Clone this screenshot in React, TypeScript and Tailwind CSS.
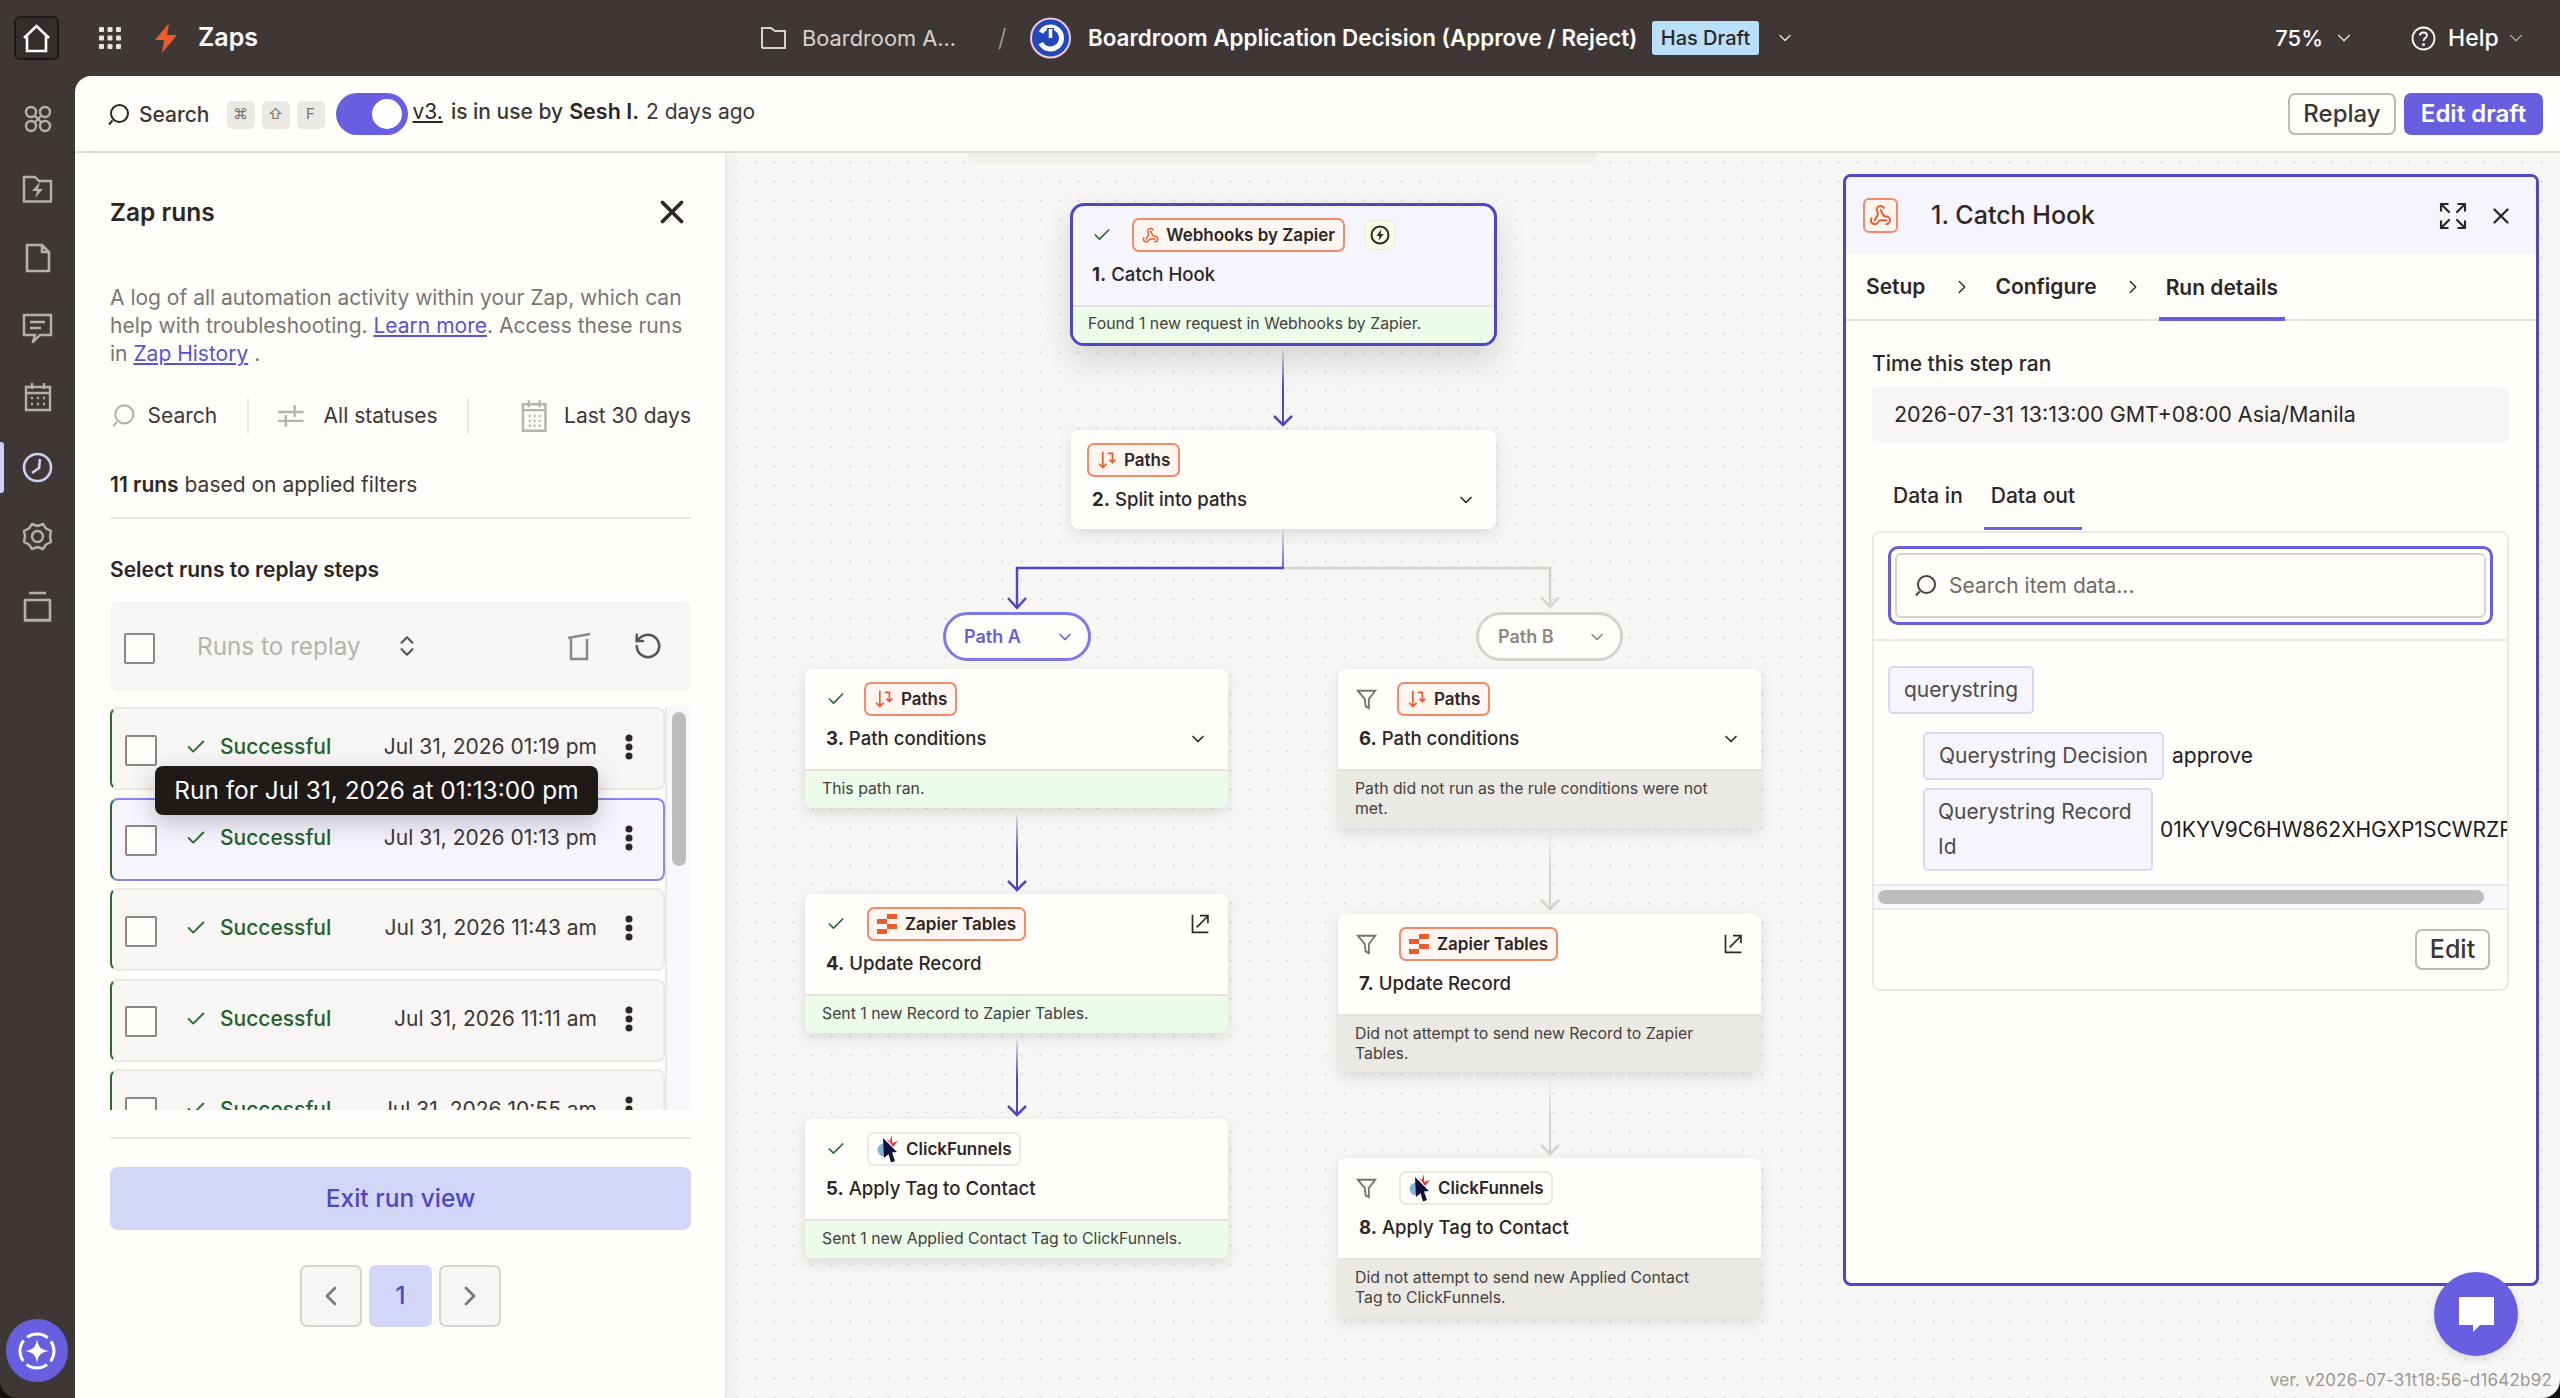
import React from "react";
import { Check, ChevronDown, ChevronLeft, ChevronRight, ChevronsUpDown, Expand, RotateCcw, Webhook, X } from "lucide-react";

const P = "#675fdf";
const D = "#4f46c2";

function S({ c = "", size = 24, vb = 24, sw = 2, color = "currentColor", children }: any) {
  return (
    <svg className={c} width={size} height={size} viewBox={`0 0 ${vb} ${vb}`} fill="none" stroke={color} strokeWidth={sw}>
      {children}
    </svg>
  );
}

const SearchIcon = ({ size = 22, color = "#4a4341", sw = 2 }: any) => (
  <S size={size} color={color} sw={sw}>
    <circle cx="13.5" cy="10.5" r="8.5" />
    <path d="M6.5 17.5 L3 21.5" />
  </S>
);

const PathsIcon = ({ size = 20 }: any) => (
  <S size={size} color="#f0592a" sw={2}>
    <path d="M7 2 V21 M2.5 16.5 L7 21 L11.5 16.5" />
    <path d="M13 4 H18.5 V15 M15 11.5 L18.5 15 L22 11.5" />
  </S>
);

const TablesIcon = () => (
  <svg width="21" height="20" viewBox="0 0 21 20" fill="#f0592a">
    <rect x="10" y="0" width="10" height="5" />
    <rect x="0" y="5" width="10" height="5" />
    <rect x="10" y="10" width="10" height="5" />
    <rect x="0" y="15" width="10" height="5" />
  </svg>
);

const CFIcon = () => (
  <svg width="22" height="28" viewBox="0 0 22 28">
    <circle cx="7" cy="15" r="6.5" fill="#7fb3dc" />
    <path d="M10 3 L12 8 L15 0 L15 8 L21 6 L16 12 Z" fill="#e8343f" />
    <path d="M6 3 L20 17 L15 17.5 L18 26 L14 27.5 L11.5 19 L7 23 Z" fill="#12113d" />
  </svg>
);

const ExtLink = () => (
  <S size={20} color="#2d2625" sw={2}>
    <path d="M3 1 V22 H22" />
    <path d="M8 16 L21 3 M12 2 H21.5 V11" />
  </S>
);

const Funnel = () => (
  <S size={22} color="#77726e" sw={2}>
    <path d="M2 3 H21 L14 12 V22 L10.5 20 L9.5 12 Z" />
  </S>
);

function Chip({ kind, c }: { kind: string; c: string }) {
  const map: any = {
    webhook: { t: "Webhooks by Zapier", i: <Webhook size={21} color="#f0592a" strokeWidth={2} /> },
    paths: { t: "Paths", i: <PathsIcon /> },
    tables: { t: "Zapier Tables", i: <TablesIcon /> },
    cf: { t: "ClickFunnels", i: <CFIcon /> },
  };
  const m = map[kind];
  const cls =
    kind === "cf"
      ? "border-[#ebe9e3] bg-[#fffefb]"
      : "border-[#f68a68] bg-[#fff5f1]";
  return (
    <div className={`h-[34px] flex items-center gap-[7px] border-2 rounded-[7px] px-[8px] text-[17px] leading-none font-semibold text-[#2d2625] whitespace-nowrap ${cls} ${c}`}>
      {m.i}
      <span>{m.t}</span>
    </div>
  );
}

function Node({ pos, kind, status, n, title, foot, tone, chev, ext, chipC = "" }: any) {
  return (
    <div className={`absolute flex flex-col rounded-[8px] bg-[#fffefb] shadow-[0_5px_14px_rgba(40,35,30,0.12)] overflow-hidden ${pos}`}>
      <div className="h-[100px] shrink-0 flex flex-col">
        <div className="flex items-center mt-[13px] pr-[18px]">
          {status === "ok" && (
            <div className={`pl-[21px] ${kind === "paths" ? "w-[59px]" : "w-[62px]"}`}>
              <Check size={20} color="#2c6b32" strokeWidth={2} />
            </div>
          )}
          {status === "skip" && (
            <div className={`pl-[18px] ${kind === "paths" ? "w-[59px]" : "w-[61px]"}`}>
              <Funnel />
            </div>
          )}
          {!status && <div className="w-[16px]" />}
          <Chip kind={kind} c={chipC} />
          {ext && <div className="ml-auto"><ExtLink /></div>}
        </div>
        <div className="flex items-center h-[24px] mt-[11px] pl-[21px] pr-[20px] text-[18.6px] font-medium text-[#2d2625] whitespace-nowrap">
          <span><b className="font-bold">{n}.</b> {title}</span>
          {chev && <ChevronDown className="ml-auto" size={20} color="#2d2625" strokeWidth={2} />}
        </div>
      </div>
      {foot && (
        <div className={`flex-1 border-t-2 border-[#e5e3dc] pl-[17px] pr-[40px] pt-[8px] text-[15.8px] leading-[20px] text-[#45403c] ${tone === "ok" ? "bg-[#ebfcea]" : "bg-[#ebe9e3]"}`}>
          {foot}
        </div>
      )}
    </div>
  );
}

function VArrow({ x, y1, y2, color, id }: any) {
  return (
    <g>
      <defs>
        <linearGradient id={id} gradientUnits="userSpaceOnUse" x1={x} x2={x} y1={y1} y2={y1 + (y2 - y1) * 0.5}>
          <stop offset="0" stopColor={color} stopOpacity="0.1" />
          <stop offset="1" stopColor={color} />
        </linearGradient>
      </defs>
      <rect x={x - 1} y={y1} width="2" height={y2 - y1} fill={`url(#${id})`} />
      <path d={`M${x - 9} ${y2 - 10} L${x} ${y2 - 1} L${x + 9} ${y2 - 10}`} stroke={color} strokeWidth="2.5" fill="none" />
    </g>
  );
}

function Connectors() {
  return (
    <svg className="absolute left-0 top-0" width="1833" height="1245" viewBox="727 153 1833 1245" fill="none">
      <defs>
        <linearGradient id="spl" gradientUnits="userSpaceOnUse" x1="1283" x2="1283" y1="531" y2="568">
          <stop offset="0" stopColor={P} stopOpacity="0.15" />
          <stop offset="1" stopColor={P} />
        </linearGradient>
      </defs>
      <path d="M1283 568 H1550 V606" stroke="#d4d2ca" strokeWidth="2.5" />
      <path d="M1541 597 L1550 607 L1559 597" stroke="#d4d2ca" strokeWidth="2.5" />
      <rect x="1282" y="531" width="2" height="37" fill="url(#spl)" />
      <path d="M1284 568 H1017 V608" stroke={D} strokeWidth="2.5" />
      <path d="M1008 598 L1017 608 L1026 598" stroke={D} strokeWidth="2.5" />
      <VArrow id="a1" x={1283} y1={350} y2={426} color={D} />
      <VArrow id="a2" x={1017} y1={815} y2={891} color={D} />
      <VArrow id="a3" x={1017} y1={1040} y2={1116} color={D} />
      <VArrow id="a4" x={1550} y1={833} y2={910} color="#d4d2ca" />
      <VArrow id="a5" x={1550} y1={1079} y2={1155} color="#d4d2ca" />
    </svg>
  );
}

function Canvas() {
  return (
    <div className="relative flex-1 bg-[#f7f6f4] bg-[radial-gradient(circle,#e3e1db_1px,transparent_1.3px)] bg-[size:19px_19px] overflow-hidden">
      <div className="absolute left-[240px] top-0 w-[630px] h-[10px] rounded-b-[8px] bg-[#f0efe9]" />
      <Connectors />

      <div className="absolute left-[343px] top-[50px] w-[427px] h-[143px] flex flex-col rounded-[14px] border-[3px] border-[#4f46c2] bg-[#f6f5fd] shadow-[0_14px_30px_rgba(40,35,30,0.16)] overflow-hidden">
        <div className="h-[99px] shrink-0 flex flex-col">
          <div className="flex items-center mt-[12px]">
            <div className="pl-[19px] w-[59px]"><Check size={20} color="#2c6b32" strokeWidth={2} /></div>
            <Chip kind="webhook" c="w-[213px]" />
            <div className="ml-[20px] w-[30px] h-[30px] flex items-center justify-center rounded-[6px] bg-[#f9fce4] border border-[#ebe9e3]">
              <svg width="20" height="20" viewBox="0 0 20 20" fill="none">
                <circle cx="10" cy="10" r="8.5" stroke="#2d2625" strokeWidth="2" />
                <path d="M11.5 4 L6.5 11 H9.5 L8.5 16 L13.5 9 H10.5 Z" fill="#2d2625" />
              </svg>
            </div>
          </div>
          <div className="h-[24px] mt-[11px] pl-[19px] flex items-center text-[18.6px] font-medium text-[#2d2625]">
            <span><b className="font-bold">1.</b> Catch Hook</span>
          </div>
        </div>
        <div className="flex-1 border-t-2 border-[#e5e3dc] bg-[#ebfcea] pl-[15px] pt-[7px] text-[15.8px] leading-[20px] text-[#45403c]">
          Found 1 new request in Webhooks by Zapier.
        </div>
      </div>

      <Node pos="left-[344px] top-[277px] w-[425px] h-[99px]" kind="paths" n="2" title="Split into paths" chev />

      <div className="absolute left-[216px] top-[459px] w-[148px] h-[49px] flex items-center pl-[18px] rounded-full border-[3px] border-[#7e78ec] bg-[#fffefb] text-[18px] font-semibold text-[#675fdf]">
        Path A
        <ChevronDown className="ml-auto mr-[13px]" size={20} strokeWidth={2} />
      </div>
      <div className="absolute left-[749px] top-[459px] w-[147px] h-[49px] flex items-center pl-[19px] rounded-full border-[3px] border-[#d4d2ca] bg-[#fffefb] text-[18px] font-semibold text-[#8b8782]">
        Path B
        <ChevronDown className="ml-auto mr-[13px]" size={20} strokeWidth={2} />
      </div>

      <Node pos="left-[78px] top-[516px] w-[423px] h-[139px]" kind="paths" status="ok" n="3" title="Path conditions" chev foot="This path ran." tone="ok" />
      <Node pos="left-[78px] top-[741px] w-[423px] h-[139px]" kind="tables" status="ok" n="4" title="Update Record" ext foot="Sent 1 new Record to Zapier Tables." tone="ok" />
      <Node pos="left-[78px] top-[966px] w-[423px] h-[139px]" kind="cf" status="ok" n="5" title="Apply Tag to Contact" foot="Sent 1 new Applied Contact Tag to ClickFunnels." tone="ok" />
      <Node pos="left-[611px] top-[516px] w-[423px] h-[159px]" kind="paths" status="skip" n="6" title="Path conditions" chev foot="Path did not run as the rule conditions were not met." />
      <Node pos="left-[611px] top-[761px] w-[423px] h-[158px]" kind="tables" status="skip" n="7" title="Update Record" ext foot="Did not attempt to send new Record to Zapier Tables." />
      <Node pos="left-[611px] top-[1005px] w-[423px] h-[159px]" kind="cf" status="skip" n="8" title="Apply Tag to Contact" foot="Did not attempt to send new Applied Contact Tag to ClickFunnels." />

      <RunPanel />

      <div className="absolute left-[1707px] top-[1119px] w-[84px] h-[84px] rounded-full bg-[#675fdf] flex items-center justify-center shadow-[0_3px_8px_rgba(0,0,0,0.12)]">
        <svg width="35" height="36" viewBox="0 0 35 36" fill="#fff" className="mt-[2px]">
          <path d="M0 0 H35 V28 H21 L14 35 H14 V28 H0 Z" />
        </svg>
      </div>
      <div className="absolute right-[8px] bottom-[8px] text-[17px] leading-[20px] tracking-[0.2px] text-[#9b9894] whitespace-nowrap">
        ver. v2026-07-31t18:56-d1642b92
      </div>
    </div>
  );
}

function RunPanel() {
  return (
    <div className="absolute left-[1116px] top-[21px] w-[696px] h-[1112px] flex flex-col rounded-[8px] border-[3px] border-[#4f46c2] bg-[#fffefb] overflow-hidden text-[#2d2625]">
      <div className="h-[77px] shrink-0 flex items-center pl-[17px] pr-[22px] bg-[#f6f5fd]">
        <div className="w-[35px] h-[35px] flex items-center justify-center rounded-[6px] border-2 border-[#f68a68] bg-[#fff5f1]">
          <Webhook size={23} color="#f0592a" strokeWidth={2} />
        </div>
        <span className="ml-[33px] text-[25px] font-medium">1. Catch Hook</span>
        <Expand className="ml-auto" size={32} strokeWidth={1.6} />
        <X className="ml-[19px]" size={26} strokeWidth={2.2} />
      </div>

      <div className="h-[67px] shrink-0 flex items-stretch pl-[20px] border-b-2 border-[#e5e3dc] text-[21px] font-semibold">
        <div className="flex items-center">Setup</div>
        <div className="flex items-center ml-[26px]"><ChevronRight size={22} strokeWidth={1.5} /></div>
        <div className="flex items-center ml-[22px]">Configure</div>
        <div className="flex items-center ml-[25px]"><ChevronRight size={22} strokeWidth={1.5} /></div>
        <div className="flex items-center ml-[15px] px-[7px] border-b-[4px] border-[#675fdf] -mb-[2px] pt-[4px]">Run details</div>
      </div>

      <div className="flex-1 pl-[26px] pr-[27px] flex flex-col">
        <div className="mt-[31px] h-[24px] flex items-center text-[21px] font-medium">Time this step ran</div>
        <div className="mt-[11px] h-[56px] flex items-center pl-[22px] pb-[1px] rounded-[6px] bg-[#f7f6f4] text-[21.5px]">
          2026-07-31 13:13:00 GMT+08:00 Asia/Manila
        </div>
        <div className="mt-[33px] h-[54px] flex items-stretch text-[21px] font-medium pl-[14px]">
          <div className="flex items-center px-[7px] pb-[14px]">Data in</div>
          <div className="flex items-center ml-[14px] px-[7px] pb-[11px] border-b-[3px] border-[#675fdf]">Data out</div>
        </div>
        <div className="h-[460px] mt-[1px] flex flex-col rounded-[8px] border-2 border-[#ebe9e3]">
          <div className="h-[108px] shrink-0 border-b-2 border-[#ebe9e3] pl-[14px] pr-[14px] pt-[13px]">
            <div className="h-[79px] rounded-[10px] border-[3px] border-[#675fdf] p-[4px]">
              <div className="h-full rounded-[6px] border-2 border-[#d6d4cc] flex items-center pl-[16px] gap-[12px] text-[21px] text-[#6f6a66]">
                <SearchIcon size={24} color="#4a4341" />
                <span>Search item data...</span>
              </div>
            </div>
          </div>
          <div className="h-[243px] shrink-0 overflow-hidden pl-[14px] pt-[25px] text-[21px]">
            <div className="w-[146px] h-[48px] flex items-center justify-center rounded-[5px] border-2 border-[#d8d9f9] bg-[#f6f5fd] text-[#4f4a48]">querystring</div>
            <div className="ml-[35px] mt-[18px] flex items-center whitespace-nowrap">
              <div className="h-[48px] w-[241px] flex items-center justify-center rounded-[5px] border-2 border-[#d8d9f9] bg-[#f6f5fd] text-[#4f4a48]">Querystring Decision</div>
              <span className="ml-[8px] text-[#1f1a19]">approve</span>
            </div>
            <div className="ml-[35px] mt-[8px] flex items-center whitespace-nowrap">
              <div className="h-[83px] w-[230px] shrink-0 px-[13px] py-[4px] leading-[35px] whitespace-normal rounded-[5px] border-2 border-[#d8d9f9] bg-[#f6f5fd] text-[#4f4a48]">Querystring Record Id</div>
              <span className="ml-[7px] text-[#1f1a19]">01KYV9C6HW862XHGXP1SCWRZRW</span>
            </div>
          </div>
          <div className="h-[26px] shrink-0 flex items-center pl-[4px] bg-[#f8f8fc] border-y-2 border-[#ebe9e3]">
            <div className="w-[606px] h-[14px] rounded-full bg-[#bdbdbd]" />
          </div>
          <div className="flex-1 flex justify-end pr-[17px] pt-[19px]">
            <div className="w-[75px] h-[41px] flex items-center justify-center rounded-[7px] border-2 border-[#bcbab3] text-[25px] font-medium text-[#3d3635]">Edit</div>
          </div>
        </div>
      </div>
    </div>
  );
}

function Row({ date, active }: { date: string; active?: boolean }) {
  return (
    <div className={`h-[83px] shrink-0 flex items-center rounded-[8px] border-2 border-l-[#2c6b32] pl-[13px] ${active ? "border-[#8a84ee] bg-[#f6f5fd]" : "border-[#ebe9e3] bg-[#f7f6f4]"}`}>
      <div className="w-[32px] h-[31px] mt-[3px] rounded-[2px] border-2 border-[#8a8785] bg-[#fffefb]" />
      <Check className="ml-[28px] -mt-[3px]" size={22} color="#2c6b32" strokeWidth={2} />
      <span className="ml-[13px] -mt-[3px] text-[21px] font-medium text-[#236229]">Successful</span>
      <span className="ml-auto -mt-[3px] text-[21px] text-[#3d3635] whitespace-nowrap">{date}</span>
      <svg className="ml-[28px] mr-[30px] -mt-[3px]" width="8" height="26" viewBox="0 0 8 26" fill="#2d2625">
        <circle cx="4" cy="4" r="3.5" />
        <circle cx="4" cy="13" r="3.5" />
        <circle cx="4" cy="22" r="3.5" />
      </svg>
    </div>
  );
}

function LeftPanel() {
  return (
    <div className="w-[652px] shrink-0 flex flex-col pl-[35px] pr-[34px] bg-[#fffefb] border-r-2 border-[#ebe9e3] rounded-tl-[12px] shadow-[6px_0_14px_rgba(0,0,0,0.035)] z-10 text-[#2d2625]">
      <div className="mt-[39px] h-[40px] flex items-center justify-between">
        <span className="text-[24.5px] font-semibold">Zap runs</span>
        <X size={38} strokeWidth={2.4} />
      </div>
      <p className="mt-[52px] text-[21px] leading-[28px] text-[#7a7672]">
        A log of all automation activity within your Zap, which can help with troubleshooting.{" "}
        <span className="underline text-[#5a52d5]">Learn more</span>. Access these runs in{" "}
        <span className="underline text-[#5a52d5]">Zap History</span> .
      </p>
      <div className="mt-[26px] h-[44px] flex items-center text-[21px] text-[#3d3635] whitespace-nowrap">
        <SearchIcon size={26} color="#b5b3ad" />
        <span className="ml-[12px]">Search</span>
        <div className="ml-[30px] w-[2px] h-[36px] bg-[#ebe9e3]" />
        <svg className="ml-[28px]" width="28" height="26" viewBox="0 0 28 26" fill="none" stroke="#b5b3ad" strokeWidth="2.5">
          <path d="M1 9 H27 M18 2 V14 M1 18 H27 M9 12 V24" />
        </svg>
        <span className="ml-[19px]">All statuses</span>
        <div className="ml-[29px] w-[2px] h-[36px] bg-[#ebe9e3]" />
        <svg className="ml-[52px]" width="27" height="34" viewBox="0 0 27 34" fill="none" stroke="#b5b3ad" strokeWidth="2.5">
          <path d="M2 5 H25 V32 H2 Z M2 11 H25 M8 1 V8 M19 1 V8" />
          <path d="M8 17 H10 M13 17 H15 M18 17 H20 M8 22 H10 M13 22 H15 M18 22 H20 M8 27 H10 M13 27 H15 M18 27 H20" />
        </svg>
        <span className="ml-[17px]">Last 30 days</span>
      </div>
      <div className="mt-[33px] h-[28px] flex items-center text-[21px] text-[#3d3635]">
        <span><b className="font-semibold text-[#2d2625]">11 runs</b> based on applied filters</span>
      </div>
      <div className="mt-[18px] h-[2px] bg-[#ebe9e3]" />
      <div className="mt-[37px] h-[28px] flex items-center text-[21px] font-semibold">Select runs to replay steps</div>
      <div className="mt-[17px] h-[90px] shrink-0 flex items-center pl-[14px] rounded-[8px] bg-[#f7f6f4]">
        <div className="w-[31px] h-[31px] mt-[4px] rounded-[2px] border-2 border-[#8a8785] bg-[#fffefb]" />
        <span className="ml-[42px] text-[24.3px] text-[#b5b3ad]">Runs to replay</span>
        <ChevronsUpDown className="ml-[33px]" size={26} color="#5c5653" strokeWidth={2} />
        <svg className="ml-auto" width="24" height="30" viewBox="0 0 24 30" fill="none" stroke="#8a8785" strokeWidth="2.5">
          <path d="M1 7 L23 3 M4 8 V28 H20 V8" />
        </svg>
        <RotateCcw className="ml-[42px] mr-[28px]" size={30} color="#5c5653" strokeWidth={2} />
      </div>
      <div className="relative mt-[16px] h-[403px] shrink-0 flex overflow-hidden">
        <div className="w-[555px] shrink-0 flex flex-col gap-[7.6px]">
          <Row date="Jul 31, 2026 01:19 pm" />
          <Row date="Jul 31, 2026 01:13 pm" active />
          <Row date="Jul 31, 2026 11:43 am" />
          <Row date="Jul 31, 2026 11:11 am" />
          <Row date="Jul 31, 2026 10:55 am" />
        </div>
        <div className="flex-1 bg-[#f8f8fc] border-l-2 border-[#ebe9e3] pt-[5px] pl-[5px]">
          <div className="w-[14px] h-[154px] rounded-full bg-[#bdbdbd]" />
        </div>
        <div className="absolute left-[45px] top-[59px] w-[443px] h-[49px] flex items-center justify-center rounded-[8px] bg-[#1f1918] text-[24.4px] text-white whitespace-nowrap shadow-[0_8px_24px_rgba(30,25,60,0.25)]">
          Run for Jul 31, 2026 at 01:13:00 pm
        </div>
      </div>
      <div className="mt-[27px] h-[2px] bg-[#ebe9e3]" />
      <div className="mt-[28px] h-[63px] shrink-0 flex items-center justify-center rounded-[8px] bg-[#d4d6f8] text-[24.5px] font-medium text-[#4f46c2]">
        Exit run view
      </div>
      <div className="mt-[35px] flex justify-center gap-[7px]">
        <div className="w-[62px] h-[62px] flex items-center justify-center rounded-[7px] border-2 border-[#d6d4cc] bg-[#f7f6f4]">
          <ChevronLeft size={32} color="#7a7672" strokeWidth={2} />
        </div>
        <div className="w-[63px] h-[62px] flex items-center justify-center rounded-[7px] bg-[#d4d6f8] text-[24px] font-medium text-[#4f46c2]">1</div>
        <div className="w-[62px] h-[62px] flex items-center justify-center rounded-[7px] border-2 border-[#d6d4cc] bg-[#f7f6f4]">
          <ChevronRight size={32} color="#7a7672" strokeWidth={2} />
        </div>
      </div>
    </div>
  );
}

function SideIcon({ active, children }: any) {
  return (
    <div className="h-[69.7px] flex items-center justify-center relative">
      {active && <div className="absolute left-0 top-[10px] w-[4px] h-[51px] rounded-r-[3px] bg-[#cdcff8]" />}
      {children}
    </div>
  );
}

function Sidebar() {
  const c = "#b3b1a9";
  return (
    <div className="w-[75px] shrink-0 flex flex-col pt-[8px]">
      <SideIcon>
        <S size={30} color={c} sw={2.4} vb={30}>
          <circle cx="8" cy="8" r="5" /><circle cx="22" cy="8" r="5" /><circle cx="8" cy="22" r="5" /><circle cx="22" cy="22" r="5" />
          <path d="M12 12 L18 18 M18 12 L12 18" />
        </S>
      </SideIcon>
      <SideIcon>
        <svg width="31" height="28" viewBox="0 0 31 28" fill="none" stroke={c} strokeWidth="2.4">
          <path d="M2 26 V2 H13 L17 6 H29 V26 M1 26.5 H30" />
          <path d="M18 7 L10 16 H15 L13 23 L21 14 H16 Z" fill={c} stroke="none" />
        </svg>
      </SideIcon>
      <SideIcon>
        <svg width="26" height="30" viewBox="0 0 26 30" fill="none" stroke={c} strokeWidth="2.6">
          <path d="M2 2 H17 L24 9 V28 H2 Z M17 2 V9 H24" />
        </svg>
      </SideIcon>
      <SideIcon>
        <svg width="31" height="30" viewBox="0 0 31 30" fill="none" stroke={c} strokeWidth="2.4">
          <path d="M2 2 H29 V22 H18 L11 29 L13 22 H2 Z" />
          <path d="M8 9 H23 M8 15 H19" />
        </svg>
      </SideIcon>
      <SideIcon>
        <svg width="28" height="29" viewBox="0 0 28 29" fill="none" stroke={c} strokeWidth="2.4">
          <path d="M2 4 H26 V27 H2 Z M2 10 H26 M8 0 V6 M20 0 V6" />
          <path d="M7 15 H9 M13 15 H15 M19 15 H21 M7 21 H9 M13 21 H15 M19 21 H21" />
        </svg>
      </SideIcon>
      <SideIcon active>
        <svg width="31" height="31" viewBox="0 0 31 31" fill="none" stroke="#cdcff8" strokeWidth="2.6">
          <circle cx="15.5" cy="15.5" r="13.5" />
          <path d="M18 7 L17 16 L10 21" />
        </svg>
      </SideIcon>
      <SideIcon>
        <svg width="31" height="29" viewBox="0 0 31 29" fill="none" stroke={c} strokeWidth="2.4">
          <path d="M10 2 L15.5 4 L21 2 L24 6.5 L29 9 L28 14.5 L29 20 L24 22.5 L21 27 L15.5 25 L10 27 L7 22.5 L2 20 L3 14.5 L2 9 L7 6.5 Z" strokeLinejoin="round" />
          <circle cx="15.5" cy="14.5" r="5.5" />
        </svg>
      </SideIcon>
      <SideIcon>
        <svg width="29" height="31" viewBox="0 0 29 31" fill="none" stroke={c} strokeWidth="2.6">
          <path d="M6 2 H23 M1 9 H28 M2 9 V29 H27 V9 M1 29.5 H28" />
        </svg>
      </SideIcon>
      <div className="mt-auto mb-[16px] ml-[6px] w-[62px] h-[63px] rounded-full bg-[#675fdf] flex items-center justify-center">
        <svg width="40" height="40" viewBox="0 0 40 40" fill="none">
          <circle cx="20" cy="20" r="17" stroke="#fff" strokeWidth="3" strokeDasharray="22 4.7" strokeDashoffset="11" />
          <path d="M20 8 C21 16 24 19 32 20 C24 21 21 24 20 32 C19 24 16 21 8 20 C16 19 19 16 20 8 Z" fill="#fff" />
        </svg>
      </div>
    </div>
  );
}

function TopBar() {
  return (
    <div className="h-[76px] shrink-0 flex items-center text-white whitespace-nowrap">
      <div className="ml-[14px] w-[45px] h-[44px] flex items-center justify-center rounded-[6px] border-2 border-[#1d1817] bg-[#352d2c]">
        <svg width="27" height="29" viewBox="0 0 27 29" fill="none" stroke="#fff" strokeWidth="2.6">
          <path d="M1 14 L13.5 2 L26 14 M4 11 V27 H23 V11" />
        </svg>
      </div>
      <svg className="ml-[40px]" width="22" height="22" viewBox="0 0 22 22" fill="#e8e6e1">
        <rect x="0" y="0" width="5" height="5" rx="1" /><rect x="8.5" y="0" width="5" height="5" rx="1" /><rect x="17" y="0" width="5" height="5" rx="1" />
        <rect x="0" y="8.5" width="5" height="5" rx="1" /><rect x="8.5" y="8.5" width="5" height="5" rx="1" /><rect x="17" y="8.5" width="5" height="5" rx="1" />
        <rect x="0" y="17" width="5" height="5" rx="1" /><rect x="8.5" y="17" width="5" height="5" rx="1" /><rect x="17" y="17" width="5" height="5" rx="1" />
      </svg>
      <svg className="ml-[34px]" width="22" height="30" viewBox="0 0 22 30" fill="#f0592a">
        <path d="M14 0 L0 17 H9 L7 30 L22 12 H12 Z" />
      </svg>
      <span className="ml-[21px] w-[60px] text-[25px] font-semibold">Zaps</span>
      <svg className="ml-[503px]" width="25" height="22" viewBox="0 0 25 22" fill="none" stroke="#d6d4cc" strokeWidth="2">
        <path d="M1 21 V1 H10 L14 4 H24 V21 H1" />
      </svg>
      <span className="ml-[16px] w-[170px] text-[21.8px] text-[#d6d4cc]">Boardroom A...</span>
      <span className="ml-[26px] w-[10px] text-[24px] font-light text-[#a8a59f]">/</span>
      <svg className="ml-[22px]" width="41" height="42" viewBox="0 0 41 42" fill="none">
        <circle cx="20.5" cy="21" r="19.5" fill="#2349b8" stroke="#f3c9dc" strokeWidth="2" />
        <circle cx="20.5" cy="21" r="11" stroke="#fff" strokeWidth="5" strokeDasharray="58 11" strokeDashoffset="-40" />
        <path d="M20.5 11 V21" stroke="#2349b8" strokeWidth="7" />
        <path d="M20.5 12 V21" stroke="#fff" strokeWidth="3.5" />
      </svg>
      <span className="ml-[17px] w-[548px] text-[22.4px] font-semibold">Boardroom Application Decision (Approve / Reject)</span>
      <span className="ml-[16px] w-[107px] h-[34px] flex items-center justify-center rounded-[3px] bg-[#b8e0fb] text-[20px] font-medium text-[#2d2625]">Has Draft</span>
      <ChevronDown className="ml-[16px]" size={20} color="#e8e6e1" strokeWidth={1.5} />
      <span className="ml-auto text-[22px] font-medium">75%</span>
      <ChevronDown className="ml-[10px]" size={22} color="#e8e6e1" strokeWidth={1.5} />
      <svg className="ml-[56px]" width="25" height="25" viewBox="0 0 25 25" fill="none" stroke="#fff" strokeWidth="1.8">
        <circle cx="12.5" cy="12.5" r="11" />
        <path d="M9 9.5 C9 5.5 16 5.5 16 9.5 C16 12 12.5 12 12.5 15" />
        <circle cx="12.5" cy="18.5" r="0.6" />
      </svg>
      <span className="ml-[12px] w-[48px] text-[23px] font-medium">Help</span>
      <ChevronDown className="ml-[9px] mr-[33px]" size={22} color="#a8a59f" strokeWidth={1.5} />
    </div>
  );
}

function SubHeader() {
  const kbd = "w-[28px] h-[28px] flex items-center justify-center rounded-[5px] bg-[#ebe9e3] text-[#77726e]";
  return (
    <div className="h-[77px] shrink-0 flex items-center pl-[31px] pr-[17px] border-b-2 border-[#e0ded7] text-[#2d2625] whitespace-nowrap">
      <div className="flex items-center mt-[2px]">
        <SearchIcon size={24} color="#2d2625" />
        <span className="ml-[9px] text-[21px] font-medium text-[#3d3635]">Search</span>
      </div>
      <div className="ml-[17px] mt-[2px] flex gap-[7px] text-[15px]">
        <div className={kbd}>⌘</div>
        <div className={kbd}>⇧</div>
        <div className={kbd}>F</div>
      </div>
      <div className="ml-[11px] w-[72px] h-[42px] rounded-full bg-[#675fdf] flex items-center justify-end pr-[6px]">
        <div className="w-[30px] h-[30px] rounded-full bg-white" />
      </div>
      <div className="ml-[5px] -mt-[5px] text-[21px]">
        <span className="underline">v3.</span>
        <span className="ml-[8px] font-medium text-[#3d3635]">is in use by</span>
        <span className="ml-[6px] text-[21.5px] font-semibold">Sesh I.</span>
        <span className="ml-[7px] text-[#3d3635]">2 days ago</span>
      </div>
      <div className="ml-auto w-[108px] h-[42px] flex items-center justify-center rounded-[7px] border-2 border-[#bcbab3] text-[24px] font-medium text-[#3d3635]">Replay</div>
      <div className="ml-[8px] w-[139px] h-[42px] flex items-center justify-center rounded-[7px] bg-[#675fdf] text-[24px] font-semibold text-white">Edit draft</div>
    </div>
  );
}

export default function App() {
  return (
    <div className="relative w-[2560px] h-[1398px] flex flex-col overflow-hidden bg-[#3f3736] font-[family-name:Inter,sans-serif]">
      <TopBar />
      <div className="flex-1 flex min-h-0">
        <Sidebar />
        <div className="flex-1 flex flex-col min-w-0 rounded-tl-[16px] bg-[#fffefb] overflow-hidden">
          <SubHeader />
          <div className="flex-1 flex min-h-0">
            <LeftPanel />
            <Canvas />
          </div>
        </div>
      </div>
      <div className="absolute inset-0 pointer-events-none rounded-b-[18px] shadow-[0_0_0_30px_#14110f]" />
    </div>
  );
}
